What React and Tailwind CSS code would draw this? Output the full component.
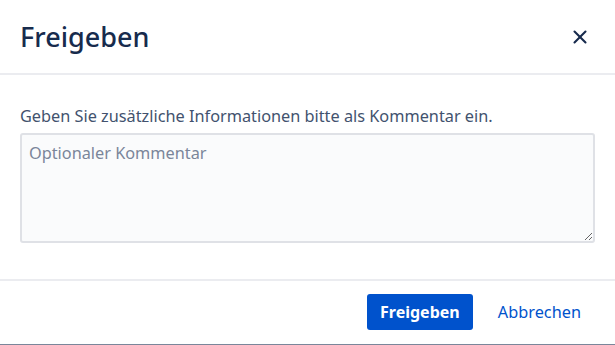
import { X } from "lucide-react";

export default function App() {
  return (
    <div
      className="flex h-[345px] w-[615px] flex-col bg-white text-[#172b4d]"
      style={{ fontFamily: '"Noto Sans", "Open Sans", sans-serif' }}
    >
      <div className="flex h-[75px] items-center justify-between border-b-2 border-[#ebecf0] pl-5 pr-[23px]">
        <h1 className="text-[27px] font-medium leading-none">Freigeben</h1>
        <button className="flex h-6 w-6 items-center justify-center text-[#172b4d]">
          <X size={22} strokeWidth={2.3} />
        </button>
      </div>

      <div className="flex flex-col px-5 pt-[29px]">
        <p className="text-[16.3px] leading-6 text-[#42526e]">
          Geben Sie zusätzliche Informationen bitte als Kommentar ein.
        </p>
        <textarea
          className="mt-[5px] h-[110px] w-[575px] resize-y rounded-[3px] border-2 border-[#dfe1e6] bg-[#fafbfc] px-[7px] py-[6px] text-[16.3px] leading-6 placeholder:text-[#7a869a] outline-none"
          placeholder="Optionaler Kommentar"
        />
      </div>

      <div className="mt-[36px] flex flex-1 items-start justify-end gap-[25px] border-t-2 border-b border-t-[#ebecf0] border-b-[#7a869a] pr-[34px] pt-[13px]">
        <button className="h-9 w-[106px] rounded-[3px] bg-[#0052cc] text-[16px] font-bold text-white">
          Freigeben
        </button>
        <button className="h-9 text-[16.3px] text-[#0052cc]">Abbrechen</button>
      </div>
    </div>
  );
}
